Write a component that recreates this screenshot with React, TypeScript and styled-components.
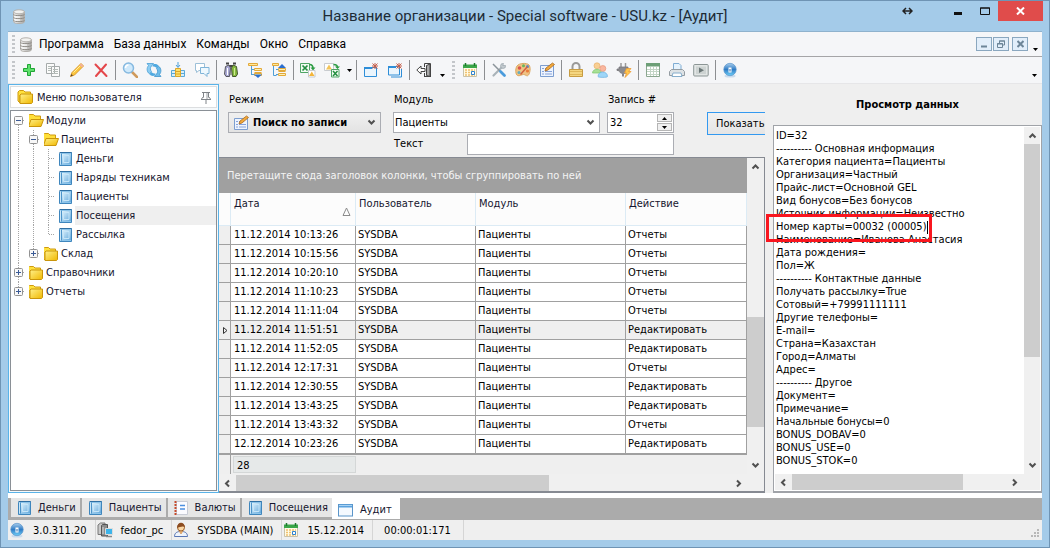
import React from "react";
import styled, { createGlobalStyle, css } from "styled-components";

const ui = '"DejaVu Sans Condensed", "DejaVu Sans", Tahoma, sans-serif';
const frame = 'Roboto, "Segoe UI", "Noto Sans", sans-serif';

const GlobalStyle = createGlobalStyle`
  *, *::before, *::after { box-sizing: border-box; }
  body { margin: 0; font-family: ${ui}; font-size: 11px; line-height: 13px; color: #000; }
  button, input, select, textarea { font: inherit; color: inherit; margin: 0; padding: 0; border: 0; background: none; border-radius: 0; outline: 0; }
  svg { display: block; flex: none; }
`;

/* ---------- window frame ---------- */

const Window = styled.div`
  display: flex;
  flex-direction: column;
  height: 100vh;
  min-height: 400px;
  padding: 0 7px 7px;
  background: #a4cbe9;
  border: 1px solid #6f94b4;
`;

const TitleBar = styled.header`
  position: relative;
  display: flex;
  flex: none;
  align-items: center;
  height: 30px;
  padding: 0 18px 0 4px;
`;

const Title = styled.h1`
  flex: 1;
  margin: 0;
  text-align: center;
  font: 400 15px/20px ${frame};
  color: #1d2b36;
  white-space: nowrap;
`;

const Caption = styled.div`
  position: absolute;
  top: 0;
  right: -1px;
  display: flex;
`;

const CaptionButton = styled.button<{ $width?: number; $close?: boolean }>`
  display: flex;
  align-items: center;
  justify-content: center;
  width: ${(p) => p.$width ?? 27}px;
  height: 20px;
  background: ${(p) => (p.$close ? "#e04c4b" : "transparent")};
`;

const Client = styled.div`
  display: flex;
  flex: 1;
  flex-direction: column;
  min-height: 0;
  background: #efefef;
  border-top: 1px solid #8fb2cd;
`;

const Grip = styled.span<{ $after?: number }>`
  width: 3px;
  height: 18px;
  margin: 0 ${(p) => p.$after ?? 4}px 0 4px;
  flex: none;
  background: repeating-linear-gradient(#c3c6ca 0 2px, transparent 2px 4px);
`;

const MenuBar = styled.nav`
  display: flex;
  flex: none;
  align-items: center;
  height: 25px;
  background: #f5f6f8;
  border-bottom: 1px solid #a5a5a7;
`;

const MenuItem = styled.button`
  padding: 0 4px 0 6px;
  font: 400 12px/18px ${frame};
  white-space: nowrap;
`;

const Spacer = styled.div`
  flex: 1;
`;

const MdiButton = styled.button<{ $apart?: boolean }>`
  display: flex;
  align-items: center;
  justify-content: center;
  width: 16px;
  height: 14px;
  margin-right: ${(p) => (p.$apart ? 3 : 1)}px;
  background: #e2eefa;
  border: 1px solid #8aa7bf;
`;

const Toolbar = styled.div`
  display: flex;
  flex: none;
  align-items: center;
  height: 27px;
  background: #f5f6f8;
  border-bottom: 1px solid #e6e6e8;
`;

const ToolButton = styled.button`
  display: flex;
  align-items: center;
  justify-content: center;
  width: 24px;
  height: 24px;
`;

const ToolSeparator = styled.span`
  width: 1px;
  height: 20px;
  margin: 0 2px;
  background: #8d8f92;
`;

const CaretButton = styled.button<{ $low?: boolean; $width: number }>`
  display: flex;
  justify-content: center;
  align-items: ${(p) => (p.$low ? "flex-end" : "center")};
  width: ${(p) => p.$width}px;
  height: 18px;
  padding-bottom: ${(p) => (p.$low ? 2 : 0)}px;
`;

/* ---------- work area ---------- */

const Work = styled.div`
  display: flex;
  flex: 1;
  min-height: 0;
`;

const Sidebar = styled.aside`
  display: flex;
  flex: 0 0 211px;
  flex-direction: column;
  gap: 2px;
  padding: 1px;
  background: #f6f9fb;
  border: 1px solid #5ab3e8;
`;

const SidebarHeader = styled.div`
  display: flex;
  flex: none;
  align-items: center;
  gap: 4px;
  height: 22px;
  padding: 0 4px 0 6px;
  background: #fff;
  border: 1px solid #dcdee0;
`;

const SidebarTitle = styled.h2`
  flex: 1;
  margin: 0;
  font-size: 11px;
  font-weight: 400;
  color: #16162e;
`;

const Tree = styled.ul`
  flex: 1;
  min-height: 0;
  margin: 0;
  padding: 0 0 0 3px;
  list-style: none;
  background: #fff;
  border: 1px solid #8a9096;
  overflow: hidden;
`;

const TreeRow = styled.li`
  display: flex;
  align-items: stretch;
  height: 19px;
`;

const TreeLabel = styled.span<{ $selected?: boolean }>`
  flex: 1;
  padding-left: 1px;
  line-height: 19px;
  color: #16162e;
  background: ${(p) => (p.$selected ? "#efefef" : "transparent")};
`;

const Main = styled.main`
  display: flex;
  flex: 1;
  flex-direction: column;
  min-width: 0;
`;

const Filters = styled.form`
  display: flex;
  flex: none;
  gap: 12px;
  height: 73px;
  padding: 9px 0 0 9px;
  overflow: hidden;
`;

const Field = styled.div<{ $width: number }>`
  display: flex;
  flex: 0 0 ${(p) => p.$width}px;
  flex-direction: column;
  gap: 5px;
  min-width: 0;
`;

const FieldLabel = styled.label`
  line-height: 14px;
  padding-left: 1px;
  white-space: nowrap;
`;

const FieldRow = styled.div<{ $gap: number }>`
  display: flex;
  gap: ${(p) => p.$gap}px;
`;

const FieldStack = styled.div`
  display: flex;
  flex: 0 0 281px;
  flex-direction: column;
  gap: 1px;
  min-width: 0;
`;

const box = css`
  display: flex;
  align-items: center;
  height: 21px;
  background: #fff;
  border: 1px solid #abadb3;
`;

const ComboBox = styled.div<{ $strong?: boolean }>`
  ${box}
  padding: 0 4px 0 ${(p) => (p.$strong ? 4 : 1)}px;
  gap: ${(p) => (p.$strong ? 4 : 0)}px;
  font-weight: ${(p) => (p.$strong ? 700 : 400)};
  ${(p) => p.$strong && "background: linear-gradient(#f0f0f0, #e3e3e3);"}
`;

const Select = styled.select`
  flex: 1;
  min-width: 0;
  height: 19px;
  appearance: none;
`;

const SpinBox = styled.div`
  ${box}
  padding: 1px 1px 1px 2px;
`;

const NumberInput = styled.input`
  flex: 1;
  width: 0;
  min-width: 0;
  appearance: textfield;
  &::-webkit-inner-spin-button { display: none; }
`;

const SpinButtons = styled.div`
  display: flex;
  flex-direction: column;
  gap: 1px;
`;

const SpinButton = styled.button`
  display: flex;
  align-items: center;
  justify-content: center;
  width: 15px;
  height: 8px;
  background: #f0f0f0;
  border: 1px solid #b5b5b5;
`;

const InlineLabel = styled.label`
  width: 74px;
  padding-left: 1px;
  line-height: 20px;
`;

const TextInput = styled.input`
  && {
    ${box}
    flex: 1;
    width: 0;
    min-width: 0;
  }
`;

const ShowButton = styled.button`
  flex: 1 0 90px;
  max-width: 90px;
  height: 23px;
  margin: 19px 0 0 21px;
  padding-left: 8px;
  text-align: left;
  background: linear-gradient(#f0f0f0, #e5e5e5);
  border: 1px solid #3399f0;
`;

const GridFrame = styled.section`
  display: flex;
  flex: 1;
  flex-direction: column;
  min-height: 0;
  border: solid #868a92;
  border-width: 1px 1px 2px 0;
`;

const GridTop = styled.div`
  display: flex;
  flex: 1;
  min-height: 0;
`;

const GridContent = styled.div`
  display: flex;
  flex: 1;
  flex-direction: column;
  min-width: 0;
  overflow: hidden;
`;

const GroupBand = styled.div`
  flex: none;
  height: 35px;
  padding-left: 8px;
  line-height: 36px;
  color: #f4f4f4;
  background: #a0a0a0;
  white-space: nowrap;
  overflow: hidden;
`;

const DataTable = styled.table`
  width: 100%;
  flex: none;
  border-collapse: separate;
  border-spacing: 0;
  table-layout: fixed;
  background: #fff;
`;

const HeadCell = styled.th`
  height: 33px;
  padding: 4px 4px 0 3px;
  font-weight: 400;
  text-align: left;
  vertical-align: top;
  color: #16162e;
  background: #fcfcfc;
  border-right: 1px solid #dcebf5;
  border-bottom: 1px solid #dcebf5;
  white-space: nowrap;
`;

const HeadInner = styled.div`
  display: flex;
  align-items: flex-start;
  justify-content: space-between;
  height: 19px;
`;

const SortMark = styled.span`
  align-self: flex-end;
`;

const Cell = styled.td`
  height: 19px;
  padding: 0 0 0 2px;
  line-height: 18px;
  border-right: 1px solid #a0a0a0;
  border-bottom: 1px solid #a0a0a0;
  white-space: nowrap;
  overflow: hidden;
`;

const DateCell = styled(Cell)`
  padding-left: 3px;
`;

const MarkCell = styled(Cell)`
  padding-left: 4px;
  background: #efefef;
`;

const DataRow = styled.tr<{ $selected: boolean }>`
  background: ${(p) => (p.$selected ? "#efefef" : "#fff")};
`;

const GridFooter = styled.div`
  display: flex;
  flex: 1;
  min-height: 21px;
  border-top: 1px solid #a0a0a0;
  border-bottom: 1px solid #b0b0b0;
`;

const FooterMark = styled.span`
  width: 12px;
  margin-right: 2px;
  border-right: 1px solid #a0a0a0;
`;

const Total = styled.output`
  width: 123px;
  margin: 1px 0;
  padding-left: 3px;
  line-height: 17px;
  background: #e6e9e9;
  border: 1px solid #d4d7d7;
`;

/* ---------- scroll bars ---------- */

const VBar = styled.div<{ $w: number }>`
  display: flex;
  flex: 0 0 ${(p) => p.$w}px;
  flex-direction: column;
  background: #f0f0f0;
`;

const HBar = styled.div`
  display: flex;
  flex: 1;
  height: 16px;
  background: #f0f0f0;
`;

const BarArrow = styled.button`
  display: flex;
  flex: 0 0 17px;
  align-items: center;
  justify-content: center;
`;

const BarTrack = styled.div<{ $grow: number }>`
  flex: ${(p) => p.$grow} 0 0;
`;

const BarThumb = styled(BarTrack)`
  background: #cdcdcd;
`;

const HScrollRow = styled.div<{ $spaced?: boolean }>`
  display: flex;
  flex: none;
  padding-top: ${(p) => (p.$spaced ? 1 : 0)}px;
  background: #f0f0f0;
`;

/* ---------- data preview ---------- */

const Preview = styled.section`
  display: flex;
  flex: 0 0 269px;
  flex-direction: column;
  margin-left: 8px;
`;

const PreviewTitle = styled.h2`
  flex: none;
  height: 41px;
  margin: 0;
  padding-top: 14px;
  text-align: center;
  font-size: 11px;
  font-weight: 700;
`;

const PreviewBox = styled.div`
  position: relative;
  display: flex;
  flex: 1;
  flex-direction: column;
  min-height: 0;
  padding: 1px;
  background: #fff;
  border: 1px solid #a0a3a8;
  border-bottom-width: 2px;
`;

const PreviewTop = styled.div`
  display: flex;
  flex: 1;
  min-height: 0;
`;

const PreviewText = styled.textarea`
  flex: 1;
  min-width: 0;
  padding: 2px 0 0 1px;
  line-height: 13px;
  resize: none;
  overflow: hidden;
  white-space: pre;
`;

const Corner = styled.span`
  flex: 0 0 17px;
  background: #f0f0f0;
`;

const Highlight = styled.div`
  position: absolute;
  top: 88px;
  left: -8px;
  width: 166px;
  height: 28px;
  border: 3px solid #f9161f;
  pointer-events: none;
`;

const TextCaret = styled.span`
  position: absolute;
  top: 4px;
  right: 1px;
  width: 1px;
  height: 13px;
  background: #000;
`;

/* ---------- document tabs and status ---------- */

const TabStrip = styled.div`
  display: flex;
  flex: none;
  align-items: flex-end;
  height: 27px;
  padding-left: 3px;
  background: linear-gradient(#fff 0 5px, #ababab 5px);
`;

const Tab = styled.button<{ $active?: boolean }>`
  display: flex;
  align-items: center;
  gap: 6px;
  height: ${(p) => (p.$active ? 22 : 19)}px;
  padding: ${(p) => (p.$active ? "3px 8px 0 6px" : "0 4px 0 5px")};
  margin: ${(p) => (p.$active ? "0 0 1px -2px" : "0 2px 3px 0")};
  color: #16162e;
  white-space: nowrap;
  background: ${(p) => (p.$active ? "#fff" : "#e6e6e6")};
`;

const StatusBar = styled.footer`
  display: flex;
  flex: none;
  height: 20px;
`;

const StatusCell = styled.span<{ $plain?: boolean }>`
  display: flex;
  align-items: center;
  gap: 8px;
  padding: ${(p) => (p.$plain ? "0 12px 0 11px" : "0 8px 0 1px")};
  border-right: 1px solid #d5d5d5;
  white-space: nowrap;
`;

const SizeGrip = styled.span`
  align-self: flex-end;
  margin: 0 2px 2px 0;
`;

/* ---------- drawings ---------- */

const Svg = ({ w = 16, h = 16, children }: { w?: number; h?: number; children: React.ReactNode }) => (
  <svg width={w} height={h} viewBox={`0 0 ${w} ${h}`} fill="none" aria-hidden="true">
    {children}
  </svg>
);

const DefsHolder = styled.svg`
  position: absolute;
`;

const Gradients = () => (
  <DefsHolder width="0" height="0" aria-hidden="true">
    <defs>
      <linearGradient id="gold" x1="0" y1="0" x2="1" y2="1"><stop offset="0" stopColor="#fff08a" /><stop offset="1" stopColor="#f0b800" /></linearGradient>
      <linearGradient id="blue" x1="0" y1="0" x2="1" y2="1"><stop offset="0" stopColor="#dff2fc" /><stop offset="1" stopColor="#62a8dc" /></linearGradient>
      <linearGradient id="silver" x1="0" y1="0" x2="1" y2="0"><stop offset="0" stopColor="#fbfbfa" /><stop offset="1" stopColor="#a9a7a4" /></linearGradient>
      <linearGradient id="orb" x1="0" y1="0" x2="0" y2="1"><stop offset="0" stopColor="#a8cdec" /><stop offset="0.5" stopColor="#2f7cc6" /><stop offset="1" stopColor="#6fd0f8" /></linearGradient>
    </defs>
  </DefsHolder>
);

const Database = () => (
  <Svg w={14} h={15}>
    <path d="M1.5 3v9.5c0 1.500 2.500 2 5.500 2s5.500-.5 5.500-2V3z" fill="url(#silver)" stroke="#b3b0ac" />
    <path d="M1.500 5.500c1 1.500 10 1.500 11 0M1.500 8.500c1 1.500 10 1.500 11 0M1.500 11.500c1 1.500 10 1.500 11 0" stroke="#8f8c87" />
    <path d="M3 4.500h5M3 8h5M3 11h5" stroke="#fff" />
    <ellipse cx="7" cy="2.800" rx="5.500" ry="2" fill="#f2f2f0" stroke="#b3b0ac" />
  </Svg>
);

const FolderClosed = () => (
  <Svg>
    <path d="M1 12V3l1.500-1.500h4L8 3h5.500v3H3v8z" fill="#ffe13d" stroke="#cf9a10" />
    <path d="M3 14.500V6l1-1h11.500v8.500l-1 1z" fill="url(#gold)" stroke="#c9950c" />
  </Svg>
);
const FolderOpen = () => (
  <Svg w={17}>
    <path d="M1 13V3l1.500-1.500h4L8 3h5.500v4" fill="#ffdf3a" stroke="#cf9a10" />
    <path d="M1.500 13.500L4 6.500h12.500l-2.500 7z" fill="url(#gold)" stroke="#c9950c" />
  </Svg>
);
const Book = () => (
  <Svg>
    <path d="M2.500 14.500V2.500L3.500 1.500h11v13z" fill="#8cc4ea" stroke="#3f86bd" />
    <path d="M2.500 1.500h12" stroke="#2f6fa3" />
    <path d="M5 3h9v10H5z" fill="url(#blue)" />
    <path d="M4.500 2.500v11" stroke="#4c93c9" />
    <path d="M3.500 2.500v11" stroke="#c9e6f8" />
    <path d="M6.500 4.500h5.500v7H6.500z" stroke="#c6e5f8" />
  </Svg>
);
const Notebook = () => (
  <Svg>
    <path d="M3.500 1.500h11v13h-11z" fill="#fbfbff" stroke="#c9ccd6" />
    <path d="M2.500 1v14" stroke="#c64a2c" strokeWidth="2" strokeDasharray="2 1" />
    <path d="M7 5.500h5M7 9h5" stroke="#4b8fdf" strokeWidth="1.500" />
  </Svg>
);
const WindowIcon = () => (
  <Svg>
    <rect x=".5" y="2.500" width="14" height="11.500" fill="#f4f9fe" stroke="#5b95c9" />
    <path d="M1 4h13" stroke="#5ba2de" strokeWidth="3" />
    <path d="M1 3.500h13" stroke="#a9d3f3" />
  </Svg>
);
const Pin = () => (
  <Svg w={12} h={13}>
    <path d="M2 1.500h8M3.500 2v4.500M8.500 2v4.500M3.500 5.500L1.500 8M8.500 5.500L10.500 8M1 8.500h10M6 9v4" stroke="#7f8388" />
    <path d="M7 2v6" stroke="#9b9fa4" />
  </Svg>
);

const Plus = () => (
  <Svg><path d="M6.500 2.500h3v4h4v3h-4v4h-3v-4h-4v-3h4z" fill="#5ee06c" stroke="#1fa535" /></Svg>
);
const Copy = () => (
  <Svg>
    <path d="M1.500 1.500h8v10h-8zM6.500 4.500h8v10h-8z" fill="#fbfbfb" stroke="#a5aaaa" />
    <path d="M3 4.500h3M3 6.500h3M3 8.500h3M8 7.500h5M8 9.500h5M8 11.500h5" stroke="#b3bbb7" />
  </Svg>
);
const Pencil = () => (
  <Svg>
    <path d="M1.500 14.500L3 10.500l9-9 2.500 2.500-9 9z" fill="#fbc63d" stroke="#dd9a2c" />
    <path d="M12 1.500L14.500 4 13 5.500 10.500 3z" fill="#f3b29c" />
    <path d="M1.500 14.500L2.500 12l1.500 1.500z" fill="#5a432d" />
    <path d="M4.500 10.500l6.500-6.500" stroke="#fff0a0" />
  </Svg>
);
const Cross = () => (
  <Svg><path d="M2.500 2.500l11 11.500M13 2.500L3 14" stroke="#e4474b" strokeWidth="2" strokeLinecap="round" /></Svg>
);
const Magnifier = () => (
  <Svg>
    <path d="M10 10l5 5" stroke="#cf9a5c" strokeWidth="2.500" strokeLinecap="round" />
    <circle cx="6.500" cy="6" r="5" fill="#cfe9fb" stroke="#86b9e0" strokeWidth="1.500" />
    <path d="M3.500 6a3 3 0 0 1 3-3" stroke="#fff" strokeWidth="1.500" />
  </Svg>
);
const Refresh = () => (
  <Svg>
    <path d="M1 1.500h6.500L5.500 4c-1.500 1.500-1.500 4 0 5.500L3.500 12C.5 9.500.5 6 2.500 3.500z" fill="#8ccdf2" stroke="#4ba0d6" strokeWidth=".8" />
    <path d="M15 14.500H8.500l2-2.500c1.500-1.500 1.500-4 0-5.500l2-2.500c3 2.500 3 6 1 8.500z" fill="#6dbcea" stroke="#4094cc" strokeWidth=".8" />
    <path d="M7 2.500c2-1 4.500-.5 5.500 1.500L10.500 6C9.500 4.500 8 4.500 6.500 4.500zM9 13.500c-2 1-4.500.5-5.500-1.500l2-2c1 1.500 2.500 1.500 4 1.500z" fill="#4fa9e0" />
  </Svg>
);
const InsertRows = () => (
  <Svg>
    <path d="M8 0v5M6 3l2 2.500L10 3" stroke="#4d9fd8" />
    <path d="M1.500 8.500h4v6h-4zM10.500 8.500h4v6h-4zM1.500 11.500h4M10.500 11.500h4" fill="#d9eef9" stroke="#5aa9d8" />
    <path d="M5.500 6.500h5v8h-5zM5.500 9.500h5M5.500 12h5" fill="#ffe16b" stroke="#dca62b" />
  </Svg>
);
const Chat = () => (
  <Svg>
    <path d="M1.500 1.500h9v7H5l-2.500 2v-2h-1z" fill="#fff" stroke="#9cc0d8" strokeLinejoin="round" />
    <path d="M6.500 5.500h8.500v6h-2v3l-3-3H6.500z" fill="#eef8fe" stroke="#7fb4d8" strokeLinejoin="round" />
  </Svg>
);
const Binoculars = () => (
  <Svg>
    <path d="M3 1.500h3M10 1.500h3M6 4h4" stroke="#444" strokeWidth="2" />
    <path d="M2.500 4.500L6 3l1.500 3-1 8.500H3L1.500 12z" fill="#a9a9d4" stroke="#55555d" />
    <path d="M13.500 4.500L10 3 8.500 6l1 8.500H13l1.500-2.500z" fill="#86bb3e" stroke="#44552e" />
    <path d="M8 5v8" stroke="#666" /><path d="M4.500 6v7" stroke="#fff" /><path d="M11.500 6v7" stroke="#cdea92" />
  </Svg>
);
const TreeLines = () => (
  <>
    <path d="M5 7.500h3M5 12.500h3" stroke="#4f9fd6" />
    <path d="M7.500 6.500h7v2h-7zM7.500 11.500h7v2h-7z" fill="#fff2b5" stroke="#e2a93a" />
  </>
);
const ExpandTree = () => (
  <Svg>
    <path d="M1.500 1.500h9v2h-9z" fill="#ffe99a" stroke="#e2a93a" />
    <path d="M7.500 10.500h7" stroke="#e2a93a" />
    <path d="M4.500 4v9" stroke="#4f9fd6" /><TreeLines />
    <path d="M7 12.500h8l-4 3.500z" fill="#2b6fd0" />
  </Svg>
);
const CollapseTree = () => (
  <Svg>
    <path d="M1.500 1.500h6v2h-6z" fill="#ffe99a" stroke="#e2a93a" />
    <path d="M7.500 9.500h7" stroke="#e2a93a" />
    <path d="M2.500 4v9.500h3" stroke="#4f9fd6" /><TreeLines />
    <path d="M7 6h8l-4-4z" fill="#2b6fd0" />
  </Svg>
);
const ExportExcel = () => (
  <Svg>
    <path d="M.5 1.500h9v9h-9z" fill="#f1fbf2" stroke="#4fa565" />
    <path d="M2.500 3.500l5 5M7.500 3.500l-5 5" stroke="#248e40" strokeWidth="1.700" />
    <path d="M9.500 2.500c2.500 0 3.500 1.500 3.500 4" stroke="#2e9d45" strokeWidth="1.700" /><path d="M10.500 5.500h5L13 8.500z" fill="#2e9d45" />
    <path d="M8.500 8.500h6.500v6.500H8.500z" fill="#fff" stroke="#c6cace" /><path d="M9 14l2.800-4.500L14.500 14z" fill="#f3b53a" />
  </Svg>
);
const ImportExcel = () => (
  <Svg>
    <path d="M.5 1.500h9v7h-9z" fill="#fff" stroke="#c9ccd0" /><path d="M2 7.500l3-5 3 5z" fill="#f3c55a" />
    <path d="M9.500 2.500c3 0 4 1 4 3" stroke="#2e9d45" strokeWidth="1.700" /><path d="M11 4.500h5L13.500 7z" fill="#2e9d45" />
    <path d="M7.500 7.500h7.500v7.500H7.500z" fill="#f1fbf2" stroke="#4fa565" /><path d="M9 9l4.500 5M13.500 9L9 14" stroke="#248e40" strokeWidth="1.500" />
  </Svg>
);
const RedMark = () => <path d="M9.500 1.500l5 5M14.500 1.500l-5 5M12 1v6M9 4h6" stroke="#c5604c" />;
const CloseWindow = () => (
  <Svg>
    <path d="M1.500 5.500h12v9h-12z" fill="#eaf5fd" stroke="#2e8ed8" /><path d="M1 6h8" stroke="#2e8ed8" strokeWidth="2" /><RedMark />
  </Svg>
);
const CloseWindows = () => (
  <Svg>
    <path d="M4 15h10.500V7" stroke="#2e8ed8" /><path d="M1.500 4.500h11v8.500h-11z" fill="#eaf5fd" stroke="#2e8ed8" /><path d="M1 5h8" stroke="#2e8ed8" strokeWidth="2" /><RedMark />
  </Svg>
);
const Door = () => (
  <Svg>
    <path d="M8 14.500h7M8.500 5V1.500h6v13M8.500 11v3.500" stroke="#444" />
    <path d="M10.500 3.500L14 2v12.500l-3.500-1z" fill="#a9a9a9" stroke="#444" />
    <path d="M.8 8L5 4v2.500h4v3H5V12z" fill="#fff" stroke="#444" />
  </Svg>
);
const Calendar = () => (
  <Svg>
    <path d="M1.500 3.500h13v11h-13z" fill="#fffbe6" stroke="#c9c2aa" />
    <path d="M1 2.500h14v3.500H1z" fill="#3aa648" /><path d="M3.500 1v3M12.500 1v3" stroke="#1d7a2c" strokeWidth="1.500" />
    <path d="M3 8h10M3 10.500h10M3 13h10" stroke="#efc06e" strokeWidth="1.500" strokeDasharray="2 1" />
    <path d="M9.500 9.500h3v3h-3z" fill="#fff" stroke="#2d83d0" />
  </Svg>
);
const Tools = () => (
  <Svg>
    <path d="M2.500 13.500l9-9" stroke="#a9b3b9" strokeWidth="2.200" strokeLinecap="round" />
    <path d="M14.500 3.500a2.500 2.500 0 1 1-2-2L11.800 3.500z" fill="#c3cacf" stroke="#98a3aa" strokeWidth=".7" />
    <path d="M2 2l7 7" stroke="#8b949a" strokeWidth="1.500" />
    <path d="M9.500 9.500l4 4" stroke="#4a9bdc" strokeWidth="2.800" strokeLinecap="round" />
  </Svg>
);
const Palette = () => (
  <Svg>
    <path d="M2 4c2-3 10-3.500 12-1s1 8-.5 10-3-.5-5-.5-4 2-6 1S0 7 2 4z" fill="#f0c283" stroke="#dba861" />
    <circle cx="4.500" cy="6" r="1.800" fill="#d9544a" /><circle cx="8.500" cy="3.800" r="1.500" fill="#69b45c" /><circle cx="12.500" cy="4.500" r="1.500" fill="#4f8bd6" /><circle cx="12.500" cy="9" r="1.600" fill="#e97b38" /><circle cx="4" cy="10.500" r="1.500" fill="#62adc0" />
    <path d="M5.500 12.500l7-8" stroke="#d1603f" strokeWidth="1.500" />
  </Svg>
);
const EditForm = () => (
  <Svg>
    <path d="M1.500 3.500h13v11h-13z" fill="#eef4fd" stroke="#7d9ed0" />
    <path d="M3 6.500h2M3 9.500h2M3 12h2M6 6.500h5M6 9.500h7M6 12h7" stroke="#86a3dc" />
    <path d="M6 9l1-3 6.500-5L15.500 2.500 9 8z" fill="#f2a93a" stroke="#a86a22" strokeWidth=".8" />
  </Svg>
);
const Lock = () => (
  <Svg>
    <path d="M4.500 7.500V4.500a3.500 3.500 0 0 1 7 0v3" stroke="#9a9a98" strokeWidth="2" />
    <path d="M1.500 7.500h13v7h-13z" fill="#f4d680" stroke="#c79c42" /><path d="M2 9.500h12M2 12.500h12" stroke="#e0b85a" />
  </Svg>
);
const Users = () => (
  <Svg>
    <circle cx="5" cy="3.800" r="3" fill="#f8cf94" stroke="#e9b069" strokeWidth=".7" /><path d="M.5 11c0-5 9-5 9 0z" fill="#a8e096" stroke="#7cc66b" strokeWidth=".7" />
    <circle cx="10.800" cy="6.500" r="3" fill="#f9b79f" stroke="#e5977a" strokeWidth=".7" /><path d="M6 14.500c0-6 9.500-6 9.500 0 0 1.200-9.500 1.200-9.500 0z" fill="#9ed6f8" stroke="#6bb0e0" strokeWidth=".7" />
  </Svg>
);
const Plug = () => (
  <Svg>
    <path d="M5 1v4M9.500 1v4" stroke="#9a9a9a" strokeWidth="1.500" />
    <path d="M1 7h2V5h9v2c0 3-1.500 4.500-4.500 4.500S3 10 3 8.500H1z" fill="#8b8b8f" stroke="#77777b" strokeWidth=".8" /><path d="M7 11.500v3" stroke="#85858a" strokeWidth="2" />
    <path d="M10.500 6.500H15L12.500 9.500H15l-6 6 1.500-4.500H8.500z" fill="#ffc74d" stroke="#ee9a34" strokeWidth=".8" />
  </Svg>
);
const TableIcon = () => (
  <Svg>
    <path d="M1.500 1.500h13v13h-13z" fill="#fff" stroke="#8aa68f" /><path d="M1 1h14v3.500H1z" fill="#6d9f77" />
    <path d="M2 7.500h12M2 9.500h12M2 12.500h12M5.500 5v9M8.500 5v9M11.500 5v9" stroke="#c3d5c6" />
  </Svg>
);
const Printer = () => (
  <Svg>
    <path d="M4.500 1.500h5.500l2 2V8H4.500z" fill="#e6f3fd" stroke="#7facd3" />
    <path d="M2.500 7.500h11l2 2v4H.5v-4z" fill="#dde2e5" stroke="#949ca2" /><path d="M4 11h8l1 3.500H3z" fill="#fff" stroke="#86aecc" />
  </Svg>
);
const Play = () => (
  <Svg>
    <rect x=".7" y="2.500" width="14.500" height="11.500" rx="1" fill="#e2e6e5" stroke="#8b9594" /><rect x="3" y="4.500" width="10" height="7.500" fill="#cdd3d2" /><path d="M6 5.500l5 2.700L6 11z" fill="#6b7777" />
  </Svg>
);
const Info = () => (
  <Svg>
    <ellipse cx="8" cy="14" rx="5.500" ry="1.500" fill="#c9dced" />
    <circle cx="8" cy="7.500" r="6.200" fill="url(#orb)" stroke="#5a94ca" strokeWidth=".7" />
    <path d="M6.500 5.500h3v5h-3z" fill="#fff" /><path d="M7.500 7h1v2.500h-1z" fill="#2c68a8" />
  </Svg>
);
const Server = () => (
  <Svg>
    <path d="M1 3l2.500-2H8v11.500H1z" fill="#c9c9c9" stroke="#777" /><path d="M4.500 3.500l1-1h5V14h-6z" fill="#8c8c8c" stroke="#555" /><path d="M6 5v7" stroke="#ddd" />
    <path d="M8.500 6.500h7v6h-7z" fill="#3cb4ea" stroke="#dcdcdc" /><path d="M9 14.500h6" stroke="#888" strokeWidth="1.500" />
  </Svg>
);
const Person = () => (
  <Svg>
    <path d="M1.500 14.500c0-4 3-4.500 4.500-5h4c1.500.5 4.500 1 4.500 5z" fill="#eef3fb" stroke="#5876b5" />
    <path d="M6 9l2 3 2-3" fill="#f0b777" stroke="#c78744" strokeWidth=".6" />
    <circle cx="8" cy="5.500" r="3.500" fill="#fbd6a3" stroke="#9a5f28" /><path d="M4 6c0-7 8-7 8 0C11 3 7 5 4 6z" fill="#8c4c20" />
  </Svg>
);

type Dir = "up" | "down" | "left" | "right";
const chevrons: Record<Dir, string> = {
  up: "M1.500 6.500L4.500 3.500l3 3",
  down: "M1.500 2.500L4.500 5.500l3-3",
  left: "M6 1.500L3 4.500l3 3",
  right: "M3 1.500L6 4.500l-3 3",
};
const Chevron = ({ dir }: { dir: Dir }) => (
  <Svg w={9} h={9}><path d={chevrons[dir]} stroke="#505050" strokeWidth="2" /></Svg>
);
const Caret = () => (
  <Svg w={5} h={3}><path d="M0 0h5L2.500 3z" fill="#000" /></Svg>
);

/* A guide cell of the tree: dotted branch lines and, for a folder, the expander. */
type Guide = "line" | "tee" | "end" | "plus" | "minus" | "topMinus" | "endPlus";
const GuideCell = ({ kind }: { kind: Guide }) => {
  const expander = kind === "minus" || kind === "plus" || kind === "topMinus" || kind === "endPlus";
  const top = kind !== "topMinus";
  const bottom = kind !== "end" && kind !== "endPlus";
  return (
    <Svg w={15} h={19}>
      <g stroke="#a5a5a5" strokeDasharray="1 1">
        {top && <path d="M4.500 0v10" />}
        {bottom && <path d="M4.500 10v9" />}
        {kind !== "line" && <path d="M5 9.500h6" />}
      </g>
      {expander && (
        <>
          <rect x=".5" y="5.500" width="8" height="8" rx="1" fill="#f8f8f8" stroke="#929292" />
          <path d={kind === "plus" || kind === "endPlus" ? "M2 9.500h5M4.500 7v5" : "M2 9.500h5"} stroke="#3a5a96" />
        </>
      )}
    </Svg>
  );
};

/* ---------- content ---------- */

const tree: { text: string; guides: Guide[]; icon: "open" | "closed" | "book"; selected?: boolean }[] = [
  { text: "Модули", guides: ["topMinus"], icon: "open" },
  { text: "Пациенты", guides: ["line", "minus"], icon: "open" },
  { text: "Деньги", guides: ["line", "line", "tee"], icon: "book" },
  { text: "Наряды техникам", guides: ["line", "line", "tee"], icon: "book" },
  { text: "Пациенты", guides: ["line", "line", "tee"], icon: "book" },
  { text: "Посещения", guides: ["line", "line", "tee"], icon: "book", selected: true },
  { text: "Рассылка", guides: ["line", "line", "end"], icon: "book" },
  { text: "Склад", guides: ["line", "endPlus"], icon: "closed" },
  { text: "Справочники", guides: ["plus"], icon: "closed" },
  { text: "Отчеты", guides: ["endPlus"], icon: "closed" },
];
const treeIcons = { open: FolderOpen, closed: FolderClosed, book: Book };

const rows: [string, string][] = [
  ["11.12.2014 10:13:26", "Отчеты"],
  ["11.12.2014 10:15:56", "Отчеты"],
  ["11.12.2014 10:20:10", "Отчеты"],
  ["11.12.2014 11:10:23", "Отчеты"],
  ["11.12.2014 11:11:04", "Отчеты"],
  ["11.12.2014 11:51:51", "Редактировать"],
  ["11.12.2014 11:52:05", "Редактировать"],
  ["11.12.2014 12:17:31", "Отчеты"],
  ["11.12.2014 12:30:55", "Редактировать"],
  ["11.12.2014 13:43:25", "Редактировать"],
  ["11.12.2014 13:43:32", "Отчеты"],
  ["12.12.2014 10:23:26", "Редактировать"],
];
const currentRow = 5;

const preview = `ID=32
---------- Основная информация
Категория пациента=Пациенты
Организация=Частный
Прайс-лист=Основной GEL
Вид бонусов=Без бонусов
Источник информации=Неизвестно
Номер карты=00032 (00005)
Наименование=Иванова Анастасия
Дата рождения=
Пол=Ж
---------- Контактные данные
Получать рассылку=True
Сотовый=+79991111111
Другие телефоны=
E-mail=
Страна=Казахстан
Город=Алматы
Адрес=
---------- Другое
Документ=
Примечание=
Начальные бонусы=0
BONUS_DOBAV=0
BONUS_USE=0
BONUS_STOK=0`;

type Tool = [string, () => React.ReactElement];
const mainTools: Tool[][] = [
  [["Добавить", Plus], ["Копировать", Copy], ["Изменить", Pencil], ["Удалить", Cross]],
  [["Поиск", Magnifier], ["Обновить", Refresh], ["Вставить", InsertRows], ["Сообщения", Chat]],
  [["Найти", Binoculars], ["Развернуть", ExpandTree], ["Свернуть", CollapseTree]],
  [["Экспорт", ExportExcel], ["Импорт", ImportExcel]],
];
const windowTools: Tool[][] = [
  [["Закрыть окно", CloseWindow], ["Закрыть все окна", CloseWindows]],
  [["Выход", Door]],
];
const extraTools: Tool[][] = [
  [["Календарь", Calendar]],
  [["Настройки", Tools], ["Оформление", Palette], ["Редактор", EditForm]],
  [["Блокировка", Lock], ["Пользователи", Users], ["Подключение", Plug]],
  [["Таблица", TableIcon], ["Печать", Printer], ["Видео", Play]],
  [["О программе", Info]],
];

const ToolGroups = ({ groups }: { groups: Tool[][] }) => (
  <>
    {groups.map((group, i) => (
      <React.Fragment key={i}>
        {i > 0 && <ToolSeparator />}
        {group.map(([name, Icon]) => (
          <ToolButton key={name} aria-label={name}><Icon /></ToolButton>
        ))}
      </React.Fragment>
    ))}
  </>
);

const VScroll = ({ w, before, thumb, after }: { w: number; before: number; thumb: number; after: number }) => (
  <VBar $w={w}>
    <BarArrow aria-label="Вверх"><Chevron dir="up" /></BarArrow>
    <BarTrack $grow={before} /><BarThumb $grow={thumb} /><BarTrack $grow={after} />
    <BarArrow aria-label="Вниз"><Chevron dir="down" /></BarArrow>
  </VBar>
);

const HScroll = ({ thumb, after }: { thumb: number; after: number }) => (
  <HBar>
    <BarArrow aria-label="Влево"><Chevron dir="left" /></BarArrow>
    <BarThumb $grow={thumb} /><BarTrack $grow={after} />
    <BarArrow aria-label="Вправо"><Chevron dir="right" /></BarArrow>
  </HBar>
);

export default function App() {
  return (
    <Window>
      <GlobalStyle />
      <Gradients />
      <TitleBar>
        <Database />
        <Title>Название организации - Special software - USU.kz - [Аудит]</Title>
        <Caption>
          <CaptionButton $width={73} aria-label="Растянуть">
            <Svg w={11} h={8}><path d="M1 4h9M4 1L1 4l3 3M7 1l3 3-3 3" stroke="#222" strokeWidth="1.500" /></Svg>
          </CaptionButton>
          <CaptionButton aria-label="Свернуть">
            <Svg w={8} h={8}><path d="M0 6.500h8" stroke="#111" strokeWidth="3" /></Svg>
          </CaptionButton>
          <CaptionButton aria-label="Развернуть">
            <Svg w={10} h={8}><path d="M.5 1h9v6.500h-9zM0 1h10" stroke="#111" /></Svg>
          </CaptionButton>
          <CaptionButton $width={45} $close aria-label="Закрыть">
            <Svg w={9} h={8}><path d="M1 .5l7 7M8 .5l-7 7" stroke="#fff" strokeWidth="2" /></Svg>
          </CaptionButton>
        </Caption>
      </TitleBar>

      <Client>
        <MenuBar>
          <Grip />
          <Database />
          {["Программа", "База данных", "Команды", "Окно", "Справка"].map((m) => (
            <MenuItem key={m}>{m}</MenuItem>
          ))}
          <Spacer />
          <MdiButton aria-label="Свернуть документ"><Svg w={6} h={8}><path d="M0 6.500h6" stroke="#6d8598" strokeWidth="2" /></Svg></MdiButton>
          <MdiButton $apart aria-label="Восстановить документ"><Svg w={8} h={8}><path d="M2.500 3V1h5v4H6M.5 3.500h5v4h-5zM2 1h6M0 4h6" stroke="#6d8598" /></Svg></MdiButton>
          <MdiButton aria-label="Закрыть документ"><Svg w={7} h={8}><path d="M.5 1l6 6M6.500 1l-6 6" stroke="#6d8598" strokeWidth="2" /></Svg></MdiButton>
          <CaretButton $low $width={13} aria-label="Ещё"><Caret /></CaretButton>
        </MenuBar>

        <Toolbar>
          <Grip $after={2} />
          <ToolGroups groups={mainTools} />
          <CaretButton $width={10} aria-label="Варианты импорта"><Caret /></CaretButton>
          <ToolSeparator />
          <ToolGroups groups={windowTools} />
          <CaretButton $low $width={12} aria-label="Кнопки панели"><Caret /></CaretButton>
          <Grip $after={3} />
          <ToolGroups groups={extraTools} />
          <Spacer />
          <CaretButton $low $width={15} aria-label="Кнопки панели"><Caret /></CaretButton>
        </Toolbar>

        <Work>
          <Sidebar>
            <SidebarHeader>
              <FolderClosed />
              <SidebarTitle>Меню пользователя</SidebarTitle>
              <Pin />
            </SidebarHeader>
            <Tree>
              {tree.map((n, i) => {
                const Icon = treeIcons[n.icon];
                return (
                  <TreeRow key={i}>
                    {n.guides.map((g, k) => <GuideCell key={k} kind={g} />)}
                    <Svg h={19} w={16}><g transform="translate(-2 2)"><Icon /></g></Svg>
                    <TreeLabel $selected={n.selected}>{n.text}</TreeLabel>
                  </TreeRow>
                );
              })}
            </Tree>
          </Sidebar>

          <Main>
            <Filters onSubmit={(e) => e.preventDefault()}>
              <Field $width={153}>
                <FieldLabel htmlFor="mode">Режим</FieldLabel>
                <ComboBox $strong>
                  <EditForm />
                  <Select id="mode"><option>Поиск по записи</option></Select>
                  <Chevron dir="down" />
                </ComboBox>
              </Field>
              <FieldStack>
                <FieldRow $gap={7}>
                  <Field $width={207}>
                    <FieldLabel htmlFor="module">Модуль</FieldLabel>
                    <ComboBox>
                      <Select id="module"><option>Пациенты</option></Select>
                      <Chevron dir="down" />
                    </ComboBox>
                  </Field>
                  <Field $width={67}>
                    <FieldLabel htmlFor="record">Запись #</FieldLabel>
                    <SpinBox>
                      <NumberInput id="record" type="number" defaultValue={32} />
                      <SpinButtons>
                        <SpinButton type="button" aria-label="Больше"><Svg w={5} h={3}><path d="M0 3h5L2.500 0z" fill="#000" /></Svg></SpinButton>
                        <SpinButton type="button" aria-label="Меньше"><Caret /></SpinButton>
                      </SpinButtons>
                    </SpinBox>
                  </Field>
                </FieldRow>
                <FieldRow $gap={0}>
                  <InlineLabel htmlFor="text">Текст</InlineLabel>
                  <TextInput id="text" type="text" />
                </FieldRow>
              </FieldStack>
              <ShowButton type="submit">Показать</ShowButton>
            </Filters>

            <GridFrame>
              <GridTop>
                <GridContent>
                  <GroupBand>Перетащите сюда заголовок колонки, чтобы сгруппировать по ней</GroupBand>
                  <DataTable>
                    <colgroup>
                      <col width="12" /><col width="125" /><col width="120" /><col width="150" /><col />
                    </colgroup>
                    <thead>
                      <tr>
                        <HeadCell />
                        <HeadCell>
                          <HeadInner>
                            Дата
                            <SortMark><Svg w={9} h={9}><path d="M4.500 1L8 8.500H1z" stroke="#8b8b8b" /></Svg></SortMark>
                          </HeadInner>
                        </HeadCell>
                        <HeadCell>Пользователь</HeadCell>
                        <HeadCell>Модуль</HeadCell>
                        <HeadCell>Действие</HeadCell>
                      </tr>
                    </thead>
                    <tbody>
                      {rows.map(([date, action], i) => (
                        <DataRow key={date} $selected={i === currentRow}>
                          <MarkCell>{i === currentRow && <Svg w={5} h={7}><path d="M.5 .5v6l3.500-3z" stroke="#333" /></Svg>}</MarkCell>
                          <DateCell>{date}</DateCell>
                          <Cell>SYSDBA</Cell>
                          <Cell>Пациенты</Cell>
                          <Cell>{action}</Cell>
                        </DataRow>
                      ))}
                    </tbody>
                  </DataTable>
                  <GridFooter>
                    <FooterMark />
                    <Total>28</Total>
                  </GridFooter>
                </GridContent>
                <VScroll w={17} before={142} thumb={111} after={30} />
              </GridTop>
              <HScrollRow $spaced>
                <HScroll thumb={313} after={181} />
                <Corner />
              </HScrollRow>
            </GridFrame>
          </Main>

          <Preview>
            <PreviewTitle>Просмотр данных</PreviewTitle>
            <PreviewBox>
              <PreviewTop>
                <PreviewText readOnly aria-label="Просмотр данных" value={preview} />
                <VScroll w={16} before={0} thumb={214} after={101} />
              </PreviewTop>
              <HScrollRow>
                <HScroll thumb={171} after={43} />
                <Corner />
              </HScrollRow>
              <Highlight><TextCaret /></Highlight>
            </PreviewBox>
          </Preview>
        </Work>

        <TabStrip>
          <Tab><Book />Деньги</Tab>
          <Tab><Book />Пациенты</Tab>
          <Tab><Notebook />Валюты</Tab>
          <Tab><Book />Посещения</Tab>
          <Tab $active><WindowIcon />Аудит</Tab>
        </TabStrip>
        <StatusBar>
          <StatusCell><Info />3.0.311.20</StatusCell>
          <StatusCell><Server />fedor_pc</StatusCell>
          <StatusCell><Person />SYSDBA (MAIN)</StatusCell>
          <StatusCell><Calendar />15.12.2014</StatusCell>
          <StatusCell $plain>00:00:01:171</StatusCell>
          <Spacer />
          <SizeGrip>
            <Svg w={9} h={9}><path d="M6 1h2M3 4h2M6 4h2M0 7h2M3 7h2M6 7h2" stroke="#b8b8b8" strokeWidth="2" /></Svg>
          </SizeGrip>
        </StatusBar>
      </Client>
    </Window>
  );
}
